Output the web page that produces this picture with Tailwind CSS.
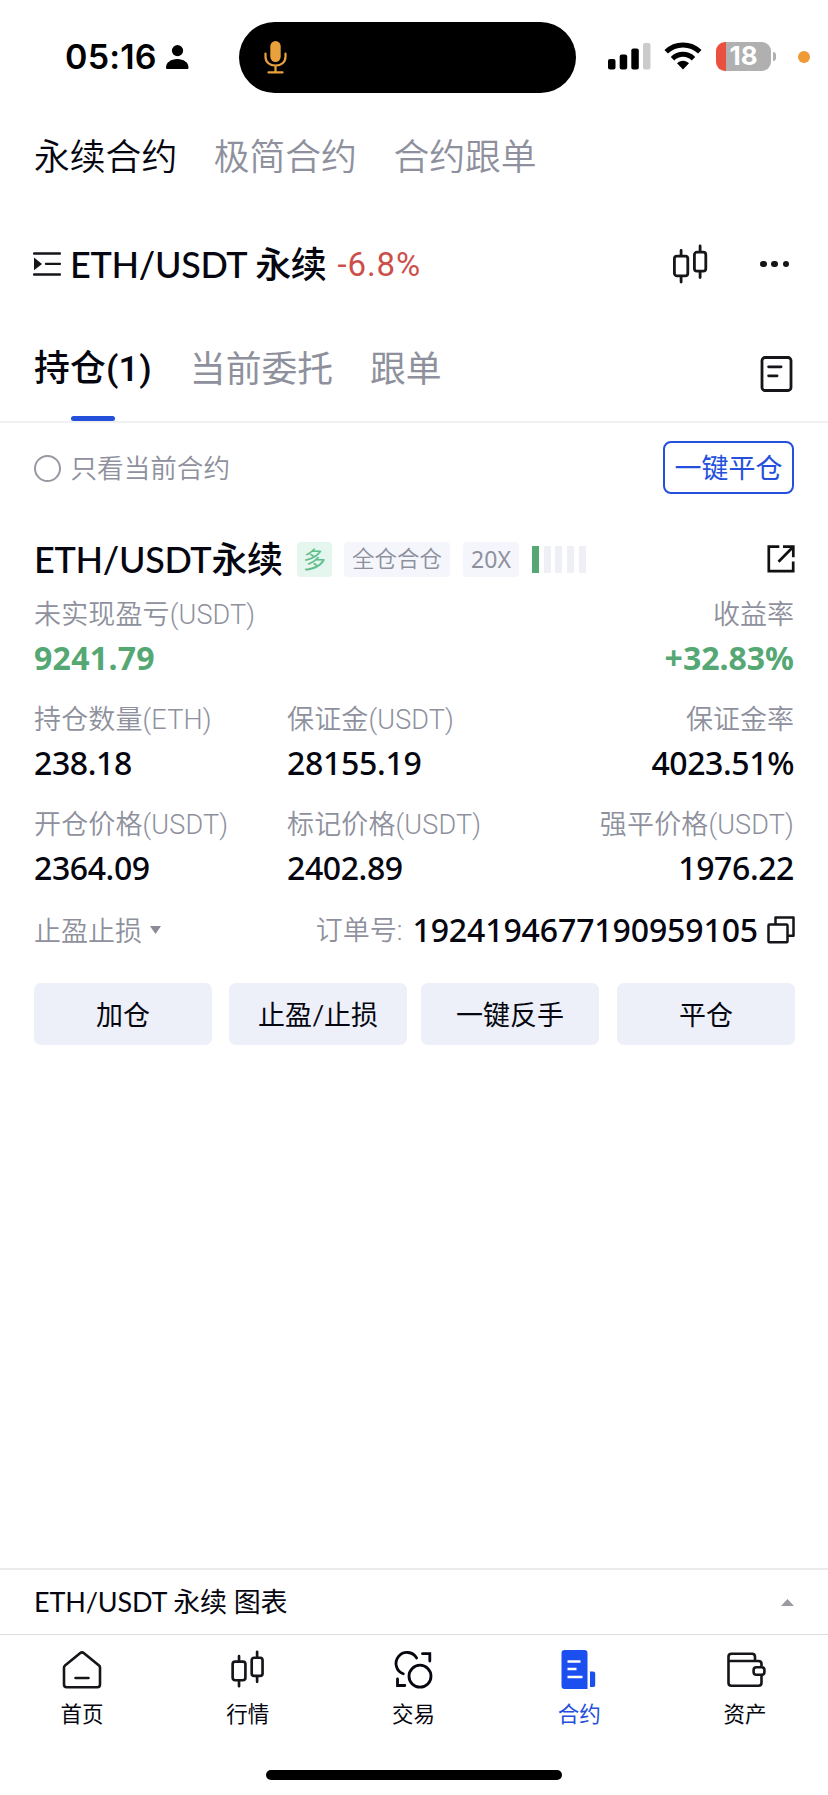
<!DOCTYPE html>
<html lang="zh-CN">
<head>
<meta charset="utf-8">
<title>永续合约</title>
<script src="https://cdn.jsdelivr.net/npm/@tailwindcss/browser@4"></script>
</head>
<body class="bg-white">
<svg class="hidden">
  <symbol id="candles" viewBox="0 0 36 42">
    <g fill="none" stroke="currentColor" stroke-width="2.8" stroke-linecap="round">
      <rect x="2.4" y="13.2" width="13.4" height="19.6" rx="2.6"/><path d="M9.1 12V7.5M9.1 34v5"/>
      <rect x="22.4" y="9.2" width="11.4" height="19" rx="2.6"/><path d="M28.1 8V3M28.1 29.500v5"/>
    </g>
  </symbol>
</svg>
<div class="relative flex h-[1795px] w-[828px] flex-col overflow-hidden bg-white font-['Lato','Noto_Sans_CJK_SC',sans-serif] leading-none text-[#05060f]">

  <header class="flex h-[114px] shrink-0 items-center">
    <div class="flex w-[239px] items-center pl-[65px]">
      <span class="w-[94px] font-['Inter',sans-serif] text-[34px] font-semibold tracking-[0.2px] whitespace-nowrap text-black">05:16</span>
      <svg class="ml-[6px] size-[24px] text-black" viewBox="0 0 24 24" fill="currentColor"><circle cx="12.500" cy="5.600" r="5.600"/><path d="M1 22.500C1 17.500 6 14 12.300 14s11.200 3.500 11.200 8.500c0 1-.6 1.500-1.500 1.500H2.500C1.600 24 1 23.500 1 22.500z"/></svg>
    </div>
    <div class="flex h-[71px] w-[337px] items-center rounded-full bg-black pl-[25px]">
      <svg class="h-[34px] w-[23px] text-[#e9a23b]" viewBox="0 0 23 34"><rect x="6.300" y="1" width="10.400" height="21" rx="5.200" fill="currentColor"/><path d="M1.500 13.500v3.200c0 5.500 4.300 9 10 9s10-3.500 10-9v-3.200M11.500 26v6M4.500 32.400h14" fill="none" stroke="currentColor" stroke-width="2.200" stroke-linecap="round"/></svg>
    </div>
    <svg class="-mt-[2px] ml-[32px] h-[28px] w-[43px]" viewBox="0 0 43 28"><g fill="#000"><rect x="0" y="17" width="7.500" height="10.500" rx="2"/><rect x="11.700" y="12.500" width="7.500" height="15" rx="2"/><rect x="23.300" y="6.500" width="7.500" height="21" rx="2"/></g><rect x="35" y="1" width="7.500" height="26.500" rx="2" fill="#cbcbcb"/></svg>
    <svg class="-mt-[2px] ml-[13px] h-[28px] w-[38px]" viewBox="0 0 38 28"><g fill="none" stroke="#000" stroke-width="5"><path d="M2.200 9.800C6.800 5.400 12.600 3 19 3s12.200 2.400 16.800 6.800"/><path d="M8.500 16.700C11.300 14 15 12.300 19 12.300s7.700 1.700 10.500 4.400"/></g><path d="M19 27.500l-6-6.200c1.600-1.600 3.700-2.500 6-2.500s4.400.9 6 2.500z"/></svg>
    <div class="ml-[14px] -mt-[2px] flex items-center gap-[2px]">
      <div class="flex h-[29px] w-[55px] items-center justify-center rounded-[9px] bg-linear-to-r from-[#e9503f] from-[10px] to-[#b0b0b0] to-[10px] font-['Inter',sans-serif] text-[26px] font-bold text-white">18</div>
      <div class="h-[9px] w-[3px] rounded-r-full bg-[#b0b0b0]"></div>
    </div>
    <div class="-mt-px ml-[22px] size-[12px] rounded-full bg-[#f09a37]"></div>
  </header>

  <nav class="flex h-[86px] shrink-0 items-center gap-[36.500px] pl-[34px] text-[35.800px] font-[350] text-[#8e919d]">
    <span class="text-[#05060f]">永续合约</span><span>极简合约</span><span>合约跟单</span>
  </nav>

  <div class="flex h-[126px] shrink-0 items-center pt-[2px] pr-[39px] pl-[33px]">
    <svg class="h-[26px] w-[28px]" viewBox="0 0 28 26"><path d="M1 2.500h26M13 12.900h14M1 23.500h26" stroke="#15151a" stroke-width="2.300" stroke-linecap="round"/><path d="M1 6.500l8 6.400-8 6.400z" fill="#15151a"/></svg>
    <span class="ml-[9px] text-[36px] font-medium tracking-[-0.300px] whitespace-nowrap">ETH/USDT 永续</span>
    <span class="ml-[11px] font-['Roboto',sans-serif] text-[33px] font-[450] tracking-[0.900px] text-[#cc4f4c]">-6.8%</span>
    <svg class="ml-auto h-[42px] w-[36px] text-[#15151a]"><use href="#candles"/></svg>
    <div class="ml-[52px] flex gap-[4.700px]"><i class="size-[6.500px] rounded-full bg-[#15151a]"></i><i class="size-[6.500px] rounded-full bg-[#15151a]"></i><i class="size-[6.500px] rounded-full bg-[#15151a]"></i></div>
  </div>

  <div class="flex h-[97px] shrink-0 justify-between border-b-2 border-[#f1f1f3] pt-[2px] pr-[34px] pl-[34px]">
    <div class="flex gap-[38px] text-[35.800px] text-[#8e919d]">
      <div class="flex flex-col items-center font-['Roboto','Noto_Sans_CJK_SC',sans-serif] font-medium text-[#05060f]"><span class="flex h-[85px] items-center tracking-[0.200px]">持仓(1)</span><i class="mt-[5px] h-[5px] w-[44px] rounded-full bg-[#2450dc]"></i></div>
      <span class="flex h-[82px] items-center">当前委托</span>
      <span class="-ml-[1px] flex h-[82px] items-center">跟单</span>
    </div>
    <svg class="mt-[27px] h-[38px] w-[34px]" viewBox="0 0 34 38"><g fill="none" stroke="#15151a" stroke-width="2.800" stroke-linecap="round"><rect x="2" y="2.500" width="29" height="33" rx="3"/><path d="M8.600 11.800h12.500M8.600 20.800h8.500"/></g></svg>
  </div>

  <div class="flex h-[90px] shrink-0 items-center justify-between px-[34px] text-[26px]">
    <div class="-ml-[0.500px] flex items-center gap-[10px] font-[350] text-[#8e919d]"><i class="size-[27px] rounded-full border-[2.500px] border-[#9799a3]"></i><span class="text-[26.600px]">只看当前合约</span></div>
    <div class="-mt-px flex h-[53px] w-[131px] items-center justify-center rounded-[8px] border-2 border-[#2450dc] text-[27px] text-[#2450dc]">一键平仓</div>
  </div>

  <main class="flex shrink-0 flex-col px-[34px]">
    <div class="flex h-[81px] items-center pt-[11px]">
      <h1 class="w-[263px] text-[36px] font-medium tracking-[-0.300px] whitespace-nowrap">ETH/USDT永续</h1>
      <span class="flex h-[35px] w-[35px] items-center justify-center rounded-[4px] bg-[#e4f6ed] text-[23px] text-[#62bd8d]">多</span>
      <span class="ml-[12px] flex h-[35px] w-[106px] items-center justify-center rounded-[4px] bg-[#f4f6fb] text-[22.500px] font-[350] text-[#8e919d]">全仓合仓</span>
      <span class="ml-[13px] flex h-[35px] w-[56px] items-center justify-center rounded-[4px] bg-[#f4f6fb] font-['Noto_Sans',sans-serif] text-[23px] text-[#8e919d]">20X</span>
      <div class="ml-[13px] flex gap-[4.700px]"><i class="h-[27px] w-[7px] bg-[#55a774]"></i><i class="h-[27px] w-[7px] bg-[#eef0f6]"></i><i class="h-[27px] w-[7px] bg-[#eef0f6]"></i><i class="h-[27px] w-[7px] bg-[#eef0f6]"></i><i class="h-[27px] w-[7px] bg-[#eef0f6]"></i></div>
      <svg class="-mr-px ml-auto h-[28px] w-[28px]" viewBox="0 0 28 28"><path d="M12.300 1.700H1.800v24.500h24.400V16.500M16 1.700h10.300v10.600M26 2L11.500 16.800" fill="none" stroke="#111" stroke-width="2.700"/></svg>
    </div>

    <div class="flex justify-between">
      <dl><dt class="flex h-[43px] items-center font-['Roboto','Noto_Sans_CJK_SC',sans-serif] text-[27px] font-[350] tracking-[0.150px] text-[#8e919d]">未实现盈亏(USDT)</dt><dd class="flex h-[42px] items-center font-['Noto_Sans',sans-serif] text-[32px] font-bold tracking-[0.300px] text-[#55a774]">9241.79</dd></dl>
      <dl class="flex flex-col items-end"><dt class="flex h-[43px] items-center font-['Roboto','Noto_Sans_CJK_SC',sans-serif] text-[27px] font-[350] text-[#8e919d]">收益率</dt><dd class="flex h-[42px] items-center font-['Noto_Sans',sans-serif] text-[32px] font-bold text-[#55a774]">+32.83%</dd></dl>
    </div>

    <div class="mt-[20px] grid grid-cols-[253px_1fr_auto] gap-y-[20px]">
      <dl><dt class="flex h-[43px] items-center font-['Roboto','Noto_Sans_CJK_SC',sans-serif] text-[27px] font-[350] tracking-[0.150px] text-[#8e919d]">持仓数量(ETH)</dt><dd class="flex h-[42px] items-center font-['Noto_Sans',sans-serif] text-[32px] font-medium tracking-[-0.400px]">238.18</dd></dl>
      <dl><dt class="flex h-[43px] items-center font-['Roboto','Noto_Sans_CJK_SC',sans-serif] text-[27px] font-[350] tracking-[0.150px] text-[#8e919d]">保证金(USDT)</dt><dd class="flex h-[42px] items-center font-['Noto_Sans',sans-serif] text-[32px] font-medium tracking-[-0.300px]">28155.19</dd></dl>
      <dl class="flex flex-col items-end"><dt class="flex h-[43px] items-center font-['Roboto','Noto_Sans_CJK_SC',sans-serif] text-[27px] font-[350] text-[#8e919d]">保证金率</dt><dd class="flex h-[42px] items-center font-['Noto_Sans',sans-serif] text-[32px] font-medium tracking-[-0.400px]">4023.51%</dd></dl>
      <dl><dt class="flex h-[43px] items-center font-['Roboto','Noto_Sans_CJK_SC',sans-serif] text-[27px] font-[350] tracking-[0.150px] text-[#8e919d]">开仓价格(USDT)</dt><dd class="flex h-[42px] items-center font-['Noto_Sans',sans-serif] text-[32px] font-medium tracking-[-0.400px]">2364.09</dd></dl>
      <dl><dt class="flex h-[43px] items-center font-['Roboto','Noto_Sans_CJK_SC',sans-serif] text-[27px] font-[350] tracking-[0.150px] text-[#8e919d]">标记价格(USDT)</dt><dd class="flex h-[42px] items-center font-['Noto_Sans',sans-serif] text-[32px] font-medium tracking-[-0.400px]">2402.89</dd></dl>
      <dl class="flex flex-col items-end"><dt class="flex h-[43px] items-center font-['Roboto','Noto_Sans_CJK_SC',sans-serif] text-[27px] font-[350] tracking-[0.150px] text-[#8e919d]">强平价格(USDT)</dt><dd class="flex h-[42px] items-center font-['Noto_Sans',sans-serif] text-[32px] font-medium tracking-[-0.400px]">1976.22</dd></dl>
    </div>

    <div class="flex h-[82px] items-center">
      <span class="text-[27px] font-[350] text-[#8e919d]">止盈止损</span>
      <svg class="ml-[8px] h-[8px] w-[11px]" viewBox="0 0 11 8"><path d="M0 0h11L5.500 8z" fill="#8a8c96"/></svg>
      <span class="ml-auto pt-[3px] font-['Roboto','Noto_Sans_CJK_SC',sans-serif] text-[27px] font-[350] text-[#8e919d]">订单号:</span>
      <span class="ml-[10px] font-['Noto_Sans',sans-serif] text-[32px] font-medium tracking-[-0.120px]">1924194677190959105</span>
      <svg class="-mr-px ml-[9px] size-[28px]" viewBox="0 0 28 28"><g fill="none" stroke="#15151a" stroke-width="2.500" stroke-linejoin="round"><rect x="1.500" y="8.500" width="19" height="17.800" rx="1"/><path d="M8.500 8V1.500h18v18.200h-5.500"/></g></svg>
    </div>

    <div class="-mr-px mt-[12px] flex text-[27px]">
      <button class="h-[62px] w-[178px] rounded-[7px] bg-[#edf0f8]">加仓</button>
      <button class="ml-[17px] h-[62px] w-[178px] rounded-[7px] bg-[#edf0f8]">止盈/止损</button>
      <button class="ml-[14px] h-[62px] w-[178px] rounded-[7px] bg-[#edf0f8]">一键反手</button>
      <button class="ml-auto h-[62px] w-[178px] rounded-[7px] bg-[#edf0f8]">平仓</button>
    </div>
  </main>

  <footer class="mt-auto h-[227px] shrink-0">
    <div class="flex h-[67px] items-center justify-between border-t-2 border-b border-t-[#ebebec] border-b-[#dddddf] px-[34px]">
      <span class="-mt-[2px] text-[27px] tracking-[-0.150px]">ETH/USDT 永续 图表</span>
      <svg class="h-[7px] w-[13px]" viewBox="0 0 13 7"><path d="M0 7h13L6.500 0z" fill="#999ba1"/></svg>
    </div>
    <div class="-ml-px grid grid-cols-5 pt-[14px] text-[21.500px]">
      <div class="flex flex-col items-center"><svg class="ml-px size-[40px]" viewBox="0 0 40 40"><path d="M18 4.200L3 16.600c-.7.600-1 1.200-1 2V35.500c0 1.700 1 2.700 2.700 2.700h30.600c1.700 0 2.700-1 2.700-2.700V18.600c0-.8-.3-1.400-1-2L22 4.200c-1.300-1.100-2.700-1.100-4 0z M13.500 29h13" fill="none" stroke="#15151a" stroke-width="2.600" stroke-linecap="round"/></svg><span class="mt-[11px] flex h-[30px] items-center">首页</span></div>
      <div class="flex flex-col items-center"><svg class="h-[40px] w-[35px] text-[#15151a]"><use href="#candles"/></svg><span class="mt-[11px] flex h-[30px] items-center">行情</span></div>
      <div class="flex flex-col items-center"><svg class="size-[40px]" viewBox="0 0 40 40"><g fill="none" stroke="#05060f" stroke-width="2.800" stroke-linecap="round"><circle cx="27" cy="27.200" r="11"/><path d="M10.300 24.800A11 11 0 1 1 23.600 9"/><path d="M29.500 4.700h7.300v7.300M4.500 30v6.500h7.300"/></g></svg><span class="mt-[11px] flex h-[30px] items-center">交易</span></div>
      <div class="flex flex-col items-center text-[#2450dc]"><svg class="size-[40px]" viewBox="0 0 40 40"><path d="M5.500 1h20c1.900 0 3 1.100 3 3v36h-23c-1.900 0-3-1.100-3-3V4c0-1.900 1.100-3 3-3zM31 22.500h3c1.500 0 2.200.7 2.200 2.200v11c0 1.500-.7 2.300-2.200 2.300h-3z" fill="#1c4ff0"/><path d="M8.500 12.500h13M8.500 20h9M8.500 28h15" stroke="#fff" stroke-width="2.600"/></svg><span class="mt-[11px] flex h-[30px] items-center">合约</span></div>
      <div class="flex flex-col items-center"><svg class="size-[40px] overflow-visible" viewBox="0 0 40 40"><g fill="none" stroke="#15151a" stroke-width="2.600"><path d="M36.500 17.500V15c0-2-1-3-3-3H3.500M3.500 12V33.700c0 2 1 3 3 3h27c2 0 3-1 3-3v-7.200M3.500 14V7.700c0-2 1-3 3-3h20.500c2 0 3 1 3 3v4"/><rect x="28.600" y="18.200" width="10.800" height="7.600" rx="2.800"/></g></svg><span class="mt-[11px] flex h-[30px] items-center">资产</span></div>
    </div>
    <div class="mx-auto mt-[40px] h-[10px] w-[296px] rounded-full bg-black"></div>
  </footer>
</div>
</body>
</html>
